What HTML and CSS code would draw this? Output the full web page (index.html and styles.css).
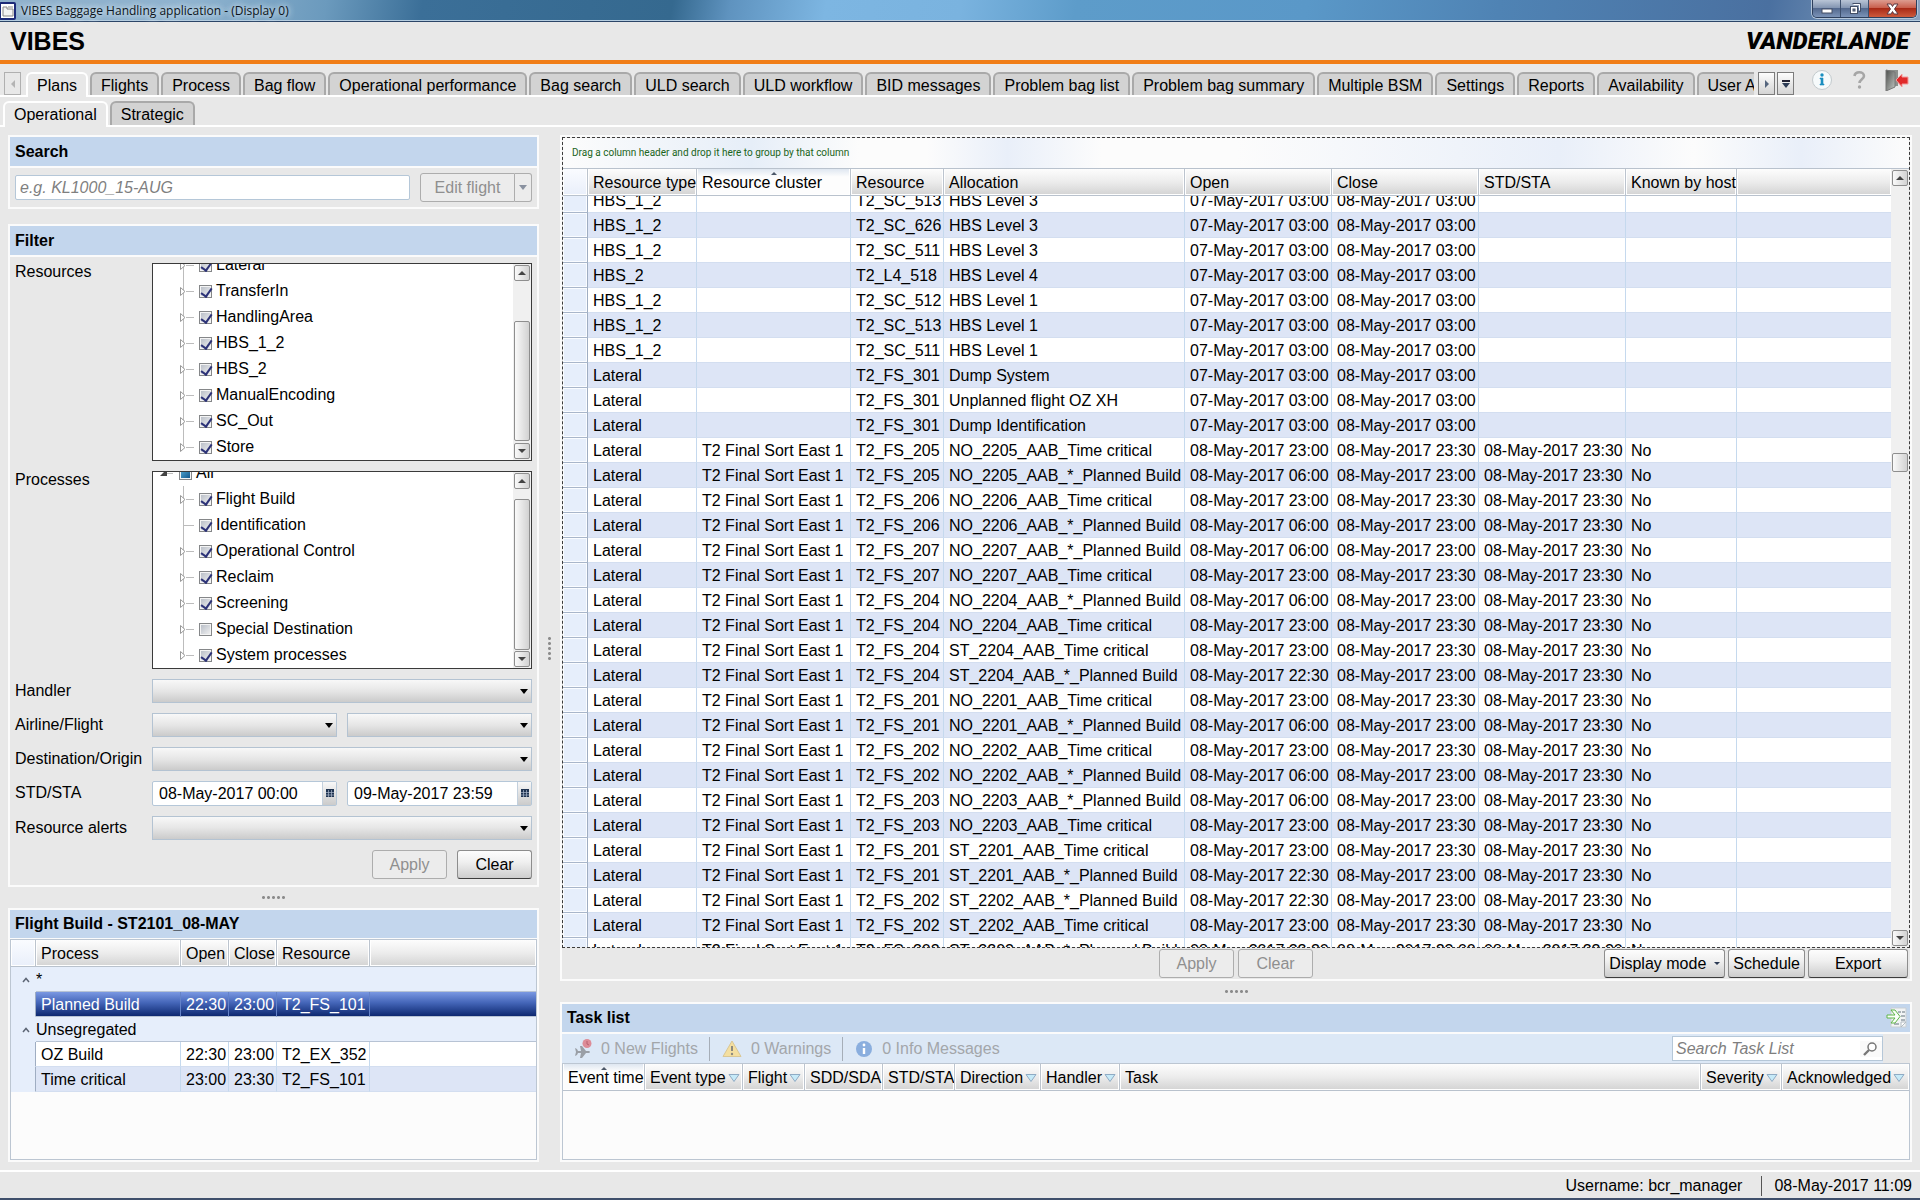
FILE: index.html
```html
<!DOCTYPE html>
<html lang="en">
<head>
  <meta charset="utf-8">
  <title>VIBES Baggage Handling application</title>
  <link rel="stylesheet" href="styles.css">
</head>
<body>

<div class="titlebar">
  <svg class="app-icon" width="16" height="18" viewBox="0 0 16 18">
    <rect x="0" y="1" width="15" height="16" rx="1" fill="#fff" stroke="#1c2a78" stroke-width="2"/>
    <path d="M3 14V5h4v2h6v7z" fill="#f4f4f4" stroke="#888"/>
    <path d="M8 5h5" stroke="#888"/>
  </svg>
  <span class="window-title">VIBES Baggage Handling application - (Display 0)</span>
  <div class="window-buttons">
    <button class="win-min" aria-label="Minimize">
      <svg width="12" height="12" viewBox="0 0 12 12"><rect x="1" y="6" width="10" height="4" fill="#fff" stroke="#444f66"/></svg>
    </button>
    <button class="win-max" aria-label="Restore">
      <svg width="12" height="13" viewBox="0 0 12 13"><path d="M3.500 1.500h8v8h-2" fill="none" stroke="#444f66"/><path d="M4.500 2.500h6v6" fill="none" stroke="#fff"/><rect x="1.500" y="4.500" width="7" height="7" fill="#fff" stroke="#444f66"/><rect x="4" y="7" width="2" height="2" fill="#7d8ba6" stroke="#444f66"/></svg>
    </button>
    <button class="win-close" aria-label="Close">
      <svg width="13" height="12" viewBox="0 0 13 12"><path d="M1 1h4l1.500 2.500L8 1h4L8.500 6 12 11H8L6.500 8.500 5 11H1l3.500-5z" fill="#fff" stroke="#5d3a44"/></svg>
    </button>
  </div>
</div>

<header>
  <h1>VIBES</h1>
  <span class="brand">VANDERLANDE</span>
</header>

<nav class="main-nav">
  <button class="nav-btn nav-left" aria-label="Previous tabs" disabled>
    <svg width="6" height="8" viewBox="0 0 6 8"><path d="M5 0v8L1 4z" fill="#b4b4b4"/></svg>
  </button>
  <div class="tabs">
    <a class="tab active" href="#">Plans</a>
    <a class="tab" href="#">Flights</a>
    <a class="tab" href="#">Process</a>
    <a class="tab" href="#">Bag flow</a>
    <a class="tab" href="#">Operational performance</a>
    <a class="tab" href="#">Bag search</a>
    <a class="tab" href="#">ULD search</a>
    <a class="tab" href="#">ULD workflow</a>
    <a class="tab" href="#">BID messages</a>
    <a class="tab" href="#">Problem bag list</a>
    <a class="tab" href="#">Problem bag summary</a>
    <a class="tab" href="#">Multiple BSM</a>
    <a class="tab" href="#">Settings</a>
    <a class="tab" href="#">Reports</a>
    <a class="tab" href="#">Availability</a>
    <a class="tab" href="#">User Administration</a>
  </div>
  <button class="nav-btn" aria-label="Next tabs">
    <svg width="6" height="8" viewBox="0 0 6 8"><path d="M1 0v8l4-4z" fill="#55657d"/></svg>
  </button>
  <button class="nav-btn" aria-label="All tabs">
    <svg width="8" height="8" viewBox="0 0 8 8"><path d="M0 1h8" stroke="#223" stroke-width="2"/><path d="M0 3h8L4 8z" fill="#2c3b55"/></svg>
  </button>
  <div class="nav-icons">
    <button aria-label="Info">
      <svg width="22" height="22" viewBox="0 0 22 22"><circle cx="11" cy="11" r="9.500" fill="#f6fafb" stroke="#c3cacd"/><path d="M9 9h3v6h1v1H9v-1h1v-5H9z" fill="#1b8fc0" stroke="#1b8fc0" stroke-width=".6"/><circle cx="11" cy="6" r="1.700" fill="#1b8fc0"/></svg>
    </button>
    <button aria-label="Help">
      <svg width="16" height="22" viewBox="0 0 16 22"><path d="M3.500 7C4 2 13 2 13 7c0 3-4.500 3.500-4.500 7" fill="none" stroke="#a6a6a6" stroke-width="2.600"/><circle cx="8.500" cy="18" r="1.700" fill="#a6a6a6"/></svg>
    </button>
    <button aria-label="Log out">
      <svg width="24" height="22" viewBox="0 0 24 22">
        <defs><linearGradient id="door" x2="1" y2="1"><stop offset="0" stop-color="#4d4f4d"/><stop offset="1" stop-color="#c3c7c3"/></linearGradient></defs>
        <path d="M1 1h12v16H1z" fill="#8c908c"/>
        <path d="M1 1l9 2v15l-9 4z" fill="url(#door)" stroke="#777"/>
        <path d="M11 11l6-6v3h6v7h-6v3z" fill="#e02a2a" stroke="#f49a9a"/>
      </svg>
    </button>
  </div>
</nav>

<nav class="sub-nav">
  <a class="tab active" href="#">Operational</a>
  <a class="tab" href="#">Strategic</a>
</nav>

<main>
  <aside>
    <section class="panel search-panel">
      <h2>Search</h2>
      <div class="search-row">
        <input type="text" class="text-input" placeholder="e.g. KL1000_15-AUG" aria-label="Search flight">
        <div class="split-button">
          <button class="btn" disabled>Edit flight</button>
          <button class="btn split-arrow" aria-label="More edit options" disabled><span class="caret"></span></button>
        </div>
      </div>
    </section>

    <section class="panel filter-panel">
      <h2>Filter</h2>
      <form class="filter-form">
        <span class="form-label">Resources</span>
        <div class="tree-box wide">
          <ul class="tree" id="resourceTree"></ul>
          <div class="scrollbar"><button type="button" class="up" aria-label="Scroll up"></button><i style="flex-grow: 40"></i><b style="flex-grow: 120"></b><i style="flex-grow: 2"></i><button type="button" class="down" aria-label="Scroll down"></button></div>
        </div>

        <span class="form-label">Processes</span>
        <div class="tree-box wide">
          <ul class="tree" id="processTree"></ul>
          <div class="scrollbar"><button type="button" class="up" aria-label="Scroll up"></button><i style="flex-grow: 10"></i><b style="flex-grow: 151"></b><i style="flex-grow: 1"></i><button type="button" class="down" aria-label="Scroll down"></button></div>
        </div>

        <label for="handler">Handler</label>
        <div class="select wide"><select id="handler"><option></option></select></div>

        <label for="airline">Airline/Flight</label>
        <div class="select"><select id="airline"><option></option></select></div>
        <div class="select"><select aria-label="Flight"><option></option></select></div>

        <label for="destination">Destination/Origin</label>
        <div class="select wide"><select id="destination"><option></option></select></div>

        <label for="stdFrom">STD/STA</label>
        <div class="date-input">
          <input type="text" id="stdFrom" value="08-May-2017 00:00">
          <button type="button" aria-label="Pick start date"><svg width="8" height="8"><use href="#calendar"/></svg></button>
        </div>
        <div class="date-input">
          <input type="text" aria-label="STD/STA until" value="09-May-2017 23:59">
          <button type="button" aria-label="Pick end date"><svg width="8" height="8"><use href="#calendar"/></svg></button>
        </div>

        <label for="alerts">Resource alerts</label>
        <div class="select wide"><select id="alerts"><option></option></select></div>

        <div class="form-buttons">
          <button type="button" class="btn" disabled>Apply</button>
          <button type="button" class="btn">Clear</button>
        </div>
      </form>
    </section>

    <div class="grip"></div>

    <section class="panel build-panel">
      <h2>Flight Build - ST2101_08-MAY</h2>
      <div class="grid-box">
        <table class="grid build-grid">
          <colgroup><col class="c-mark"><col class="c-process"><col class="c-time"><col class="c-time"><col class="c-res"><col></colgroup>
          <thead>
            <tr><th></th><th>Process</th><th>Open</th><th>Close</th><th>Resource</th><th></th></tr>
          </thead>
          <tbody>
            <tr class="group"><td class="mark"><svg width="8" height="6"><use href="#chevron"/></svg></td><td colspan="5">*</td></tr>
            <tr class="selected"><td class="mark"></td><td>Planned Build</td><td>22:30</td><td>23:00</td><td>T2_FS_101</td><td></td></tr>
            <tr class="group"><td class="mark"><svg width="8" height="6"><use href="#chevron"/></svg></td><td colspan="5">Unsegregated</td></tr>
            <tr><td class="mark"></td><td>OZ Build</td><td>22:30</td><td>23:00</td><td>T2_EX_352</td><td></td></tr>
            <tr class="alt"><td class="mark"></td><td>Time critical</td><td>23:00</td><td>23:30</td><td>T2_FS_101</td><td></td></tr>
          </tbody>
        </table>
      </div>
    </section>
  </aside>

  <div class="grip vertical"></div>

  <div class="content">
    <section class="panel plan-panel">
      <div class="plan-box">
        <div class="group-bar">Drag a column header and drop it here to group by that column</div>
        <div class="plan-scroll">
          <div class="plan-rows" id="planRows">
            <table class="grid plan-grid">
              <colgroup>
                <col class="c-mark"><col class="c-type"><col class="c-cluster"><col class="c-resource"><col class="c-alloc">
                <col class="c-date"><col class="c-date"><col class="c-date"><col class="c-known"><col>
              </colgroup>
              <thead>
                <tr>
                  <th></th><th>Resource type</th><th class="sorted">Resource cluster</th><th>Resource</th><th>Allocation</th>
                  <th>Open</th><th>Close</th><th>STD/STA</th><th>Known by host</th><th></th>
                </tr>
              </thead>
              <tbody>
                <!-- Plan rows are added by loadPlans() -->
              </tbody>
            </table>
          </div>
          <div class="scrollbar"><button type="button" class="up" aria-label="Scroll up"></button><i style="flex-grow: 268"></i><b style="flex-grow: 17"></b><i style="flex-grow: 459"></i><button type="button" class="down" aria-label="Scroll down"></button></div>
        </div>
      </div>
      <div class="plan-footer">
        <div class="footer-center">
          <button class="btn" disabled>Apply</button>
          <button class="btn" disabled>Clear</button>
        </div>
        <div class="footer-right">
          <button class="btn tight menu-btn">Display mode<span class="caret small"></span></button>
          <button class="btn tight">Schedule</button>
          <button class="btn export-btn">Export</button>
        </div>
      </div>
    </section>

    <div class="grip"></div>

    <section class="panel task-panel">
      <h2>Task list
        <button class="export-icon" aria-label="Export task list">
          <svg width="22" height="22" viewBox="0 0 22 22">
            <path d="M5 1h15v19H5z" fill="#f2f4f5" stroke="#c9cfd4"/>
            <path d="M12 5h3M16 5h3M15 9h4M15 13h4M8 17h5" stroke="#aab2b8" stroke-width="2"/>
            <path d="M15 20v-5h5z" fill="#fff" stroke="#b4bcc2"/>
            <path d="M1 8h8L5 3h4l5 6.500L9 16H5l4-5H1z" fill="#fbfffa" stroke="#5fb548"/>
          </svg>
        </button>
      </h2>
      <div class="task-tools">
        <div class="task-counts">
          <button disabled>
            <svg width="18" height="20" viewBox="0 0 18 20"><path d="M1 9l2 1 1 2h3L6 7h2l4 5h3q2 1 0 2h-3l-4 5H6l1-5H4l-1 2-2 1 1-4z" fill="#9a9fa6"/><circle cx="13" cy="4.500" r="4.500" fill="#dd8c97"/><path d="M13 2v3l2 1" fill="none" stroke="#b8606e"/></svg>
            0 New Flights
          </button>
          <button disabled>
            <svg width="20" height="18" viewBox="0 0 20 18"><path d="M10 1l9 15.500H1z" fill="#f4dfa0" stroke="#d9c795" stroke-linejoin="round"/><path d="M10 6v5" stroke="#8d8a80" stroke-width="2"/><circle cx="10" cy="14" r="1.200" fill="#8d8a80"/></svg>
            0 Warnings
          </button>
          <button disabled>
            <svg width="18" height="18" viewBox="0 0 18 18"><circle cx="9" cy="9" r="8" fill="#8aaede"/><path d="M9 8v6" stroke="#fff" stroke-width="2.400"/><circle cx="9" cy="5" r="1.400" fill="#fff"/></svg>
            0 Info Messages
          </button>
        </div>
        <div class="task-search">
          <input type="text" placeholder="Search Task List" aria-label="Search Task List">
          <button aria-label="Search">
            <svg width="16" height="16" viewBox="0 0 16 16"><circle cx="10" cy="6" r="4" fill="#fff" stroke="#777" stroke-width="1.500"/><path d="M7 9l-5 5" stroke="#777" stroke-width="2.400"/></svg>
          </button>
        </div>
      </div>
      <div class="grid-box">
        <table class="grid task-grid">
          <colgroup>
            <col class="t-time"><col class="t-type"><col class="t-flight"><col class="t-sdd"><col class="t-std">
            <col class="t-dir"><col class="t-handler"><col><col class="t-sev"><col class="t-ack">
          </colgroup>
          <thead>
            <tr>
              <th class="sorted">Event time</th>
              <th>Event type<svg width="12" height="10"><use href="#funnel"/></svg></th>
              <th>Flight<svg width="12" height="10"><use href="#funnel"/></svg></th>
              <th>SDD/SDA</th>
              <th>STD/STA</th>
              <th>Direction<svg width="12" height="10"><use href="#funnel"/></svg></th>
              <th>Handler<svg width="12" height="10"><use href="#funnel"/></svg></th>
              <th>Task</th>
              <th>Severity<svg width="12" height="10"><use href="#funnel"/></svg></th>
              <th>Acknowledged<svg width="12" height="10"><use href="#funnel"/></svg></th>
            </tr>
          </thead>
          <tbody></tbody>
        </table>
      </div>
    </section>
  </div>
</main>

<footer>
  <span>Username: bcr_manager</span>
  <span class="clock">08-May-2017 11:09</span>
</footer>

<svg class="symbols" width="0" height="0">
  <symbol id="calendar" viewBox="0 0 8 8"><rect width="8" height="8" fill="#1f3350"/><path d="M2.500 1v7M5.500 1v7M0 3.500h8M0 6h8" stroke="#aab8cc" stroke-width=".7"/></symbol>
  <symbol id="chevron" viewBox="0 0 8 6"><path d="M1 5l3-3.500L7 5" fill="none" stroke="#5d6675" stroke-width="1.500"/></symbol>
  <symbol id="funnel" viewBox="0 0 12 10"><path d="M1 1.500h10L6 8.500z" fill="#c6eaf8" stroke="#8fabc4"/></symbol>
  <symbol id="twig" viewBox="0 0 16 26"><path d="M4.500 0v26M7 13.500h8" stroke="#bcbcbc"/><path d="M1.500 9.500v8l4.500-4z" fill="#fff" stroke="#999"/></symbol>
  <symbol id="twigLast" viewBox="0 0 16 26"><path d="M4.500 0v13M7 13.500h8" stroke="#bcbcbc"/><path d="M1.500 9.500v8l4.500-4z" fill="#fff" stroke="#999"/></symbol>
  <symbol id="twigLeaf" viewBox="0 0 16 26"><path d="M4.500 0v26M4 13.500h11" stroke="#bcbcbc"/></symbol>
  <symbol id="twigOpen" viewBox="0 0 16 26"><path d="M8 13.500h6" stroke="#bcbcbc"/><path d="M8 9v7H1z" fill="#444"/></symbol>
</svg>

<script>
  const resources = ["Lateral", "TransferIn", "HandlingArea", "HBS_1_2", "HBS_2", "ManualEncoding", "SC_Out", "Store"];
  const processes = ["Flight Build", "Identification", "Operational Control", "Reclaim", "Screening", "Special Destination", "System processes"];

  // type, cluster, resource, allocation, open, close, std, known
  const plans = [];

  function addSystem(type, resource, allocation) {
    plans.push([type, "", resource, allocation, "07-May-2017 03:00", "08-May-2017 03:00", "", ""]);
  }

  function addSort(number, prefix, process) {
    const critical = process === "Time critical";
    const open = critical ? "23:00" : (prefix === "ST" ? "22:30" : "06:00");
    const close = critical ? "23:30" : "23:00";
    const name = prefix + "_2" + number + "_AAB_" + (critical ? "" : "*_") + process;
    plans.push(["Lateral", "T2 Final Sort East 1", "T2_FS_" + number, name,
      "08-May-2017 " + open, "08-May-2017 " + close, "08-May-2017 23:30", "No"]);
  }

  addSystem("HBS_1_2", "T2_SC_513", "HBS Level 3");
  addSystem("HBS_1_2", "T2_SC_626", "HBS Level 3");
  addSystem("HBS_1_2", "T2_SC_511", "HBS Level 3");
  addSystem("HBS_2", "T2_L4_518", "HBS Level 4");
  addSystem("HBS_1_2", "T2_SC_512", "HBS Level 1");
  addSystem("HBS_1_2", "T2_SC_513", "HBS Level 1");
  addSystem("HBS_1_2", "T2_SC_511", "HBS Level 1");
  addSystem("Lateral", "T2_FS_301", "Dump System");
  addSystem("Lateral", "T2_FS_301", "Unplanned flight OZ XH");
  addSystem("Lateral", "T2_FS_301", "Dump Identification");

  addSort(205, "NO", "Time critical");
  addSort(205, "NO", "Planned Build");
  addSort(206, "NO", "Time critical");
  addSort(206, "NO", "Planned Build");
  addSort(207, "NO", "Planned Build");
  addSort(207, "NO", "Time critical");
  addSort(204, "NO", "Planned Build");
  addSort(204, "NO", "Time critical");
  addSort(204, "ST", "Time critical");
  addSort(204, "ST", "Planned Build");
  addSort(201, "NO", "Time critical");
  addSort(201, "NO", "Planned Build");
  addSort(202, "NO", "Time critical");
  addSort(202, "NO", "Planned Build");
  addSort(203, "NO", "Planned Build");
  addSort(203, "NO", "Time critical");
  addSort(201, "ST", "Time critical");
  addSort(201, "ST", "Planned Build");
  addSort(202, "ST", "Planned Build");
  addSort(202, "ST", "Time critical");
  addSort(203, "ST", "Planned Build");

  function loadPlans() {
    const table = document.querySelector("#planRows tbody");
    plans.forEach((plan, index) => {
      const row = document.createElement("tr");
      if (index % 2) row.className = "alt";
      row.innerHTML = `<td class="mark"></td>` + plan.map(value => `<td>${value}</td>`).join("") + "<td></td>";
      table.appendChild(row);
    });
    document.getElementById("planRows").scrollTop = 8;
  }

  function treeItem(name, twig, checked) {
    return `<li><svg width="16" height="26"><use href="#${twig}"/></svg>
      <label><input type="checkbox" ${checked ? "checked" : ""}>${name}</label></li>`;
  }

  function loadTree(id, names, root) {
    const tree = document.getElementById(id);
    let html = root ? `<li class="root"><svg width="16" height="26"><use href="#twigOpen"/></svg>
      <label><input type="checkbox" class="partial">${root}</label></li>` : "";
    names.forEach((name, index) => {
      let twig = index === names.length - 1 ? "twigLast" : "twig";
      if (name === "Identification") twig = "twigLeaf";
      html += treeItem(name, twig, name !== "Special Destination");
    });
    tree.innerHTML = html;
    tree.scrollTop = tree.scrollHeight;
  }

  loadTree("resourceTree", resources);
  loadTree("processTree", processes, "All");
  loadPlans();
</script>

</body>
</html>
```
FILE: styles.css
```css
* {
  box-sizing: border-box;
}

body {
  font-family: "Liberation Sans", Arial, sans-serif;
  font-size: 16px;
  color: #000;
  background: #e8e8e8;
  margin: 0;
  height: 100vh;
  display: flex;
  flex-direction: column;
  overflow: hidden;
}

h1, h2, ul {
  margin: 0;
  padding: 0;
}

a {
  color: inherit;
  text-decoration: none;
}

button, input, select {
  font: inherit;
  color: inherit;
  margin: 0;
}

svg {
  display: block;
  flex: none;
}

.symbols {
  position: absolute;
}

/* window title */
.titlebar {
  flex: none;
  display: flex;
  align-items: center;
  height: 22px;
  border-bottom: 1px solid #2c4668;
  box-shadow: inset 0 -1px #b5cde0;
  background: linear-gradient(100deg, #8fb0cb 0%, #8fb3cf 10%, #6b9abd 17%, #3b6f98 22%, #35698f 35%, #5f93bf 38%, #7db6e2 43%, #7ab3df 50%, #5d9cca 56%, #5a98c8 68%, #4f83b4 78%, #4a70a0 92%, #8ba3c0 100%);
}

.app-icon {
  margin: 0 5px 0 0;
}

.window-title {
  flex: 1;
  font-family: "Open Sans", "Noto Sans", sans-serif;
  font-size: 12px;
  color: #0b1420;
  text-shadow: 0 0 6px #dbe8f2, 0 0 6px #dbe8f2;
}

.window-buttons {
  align-self: flex-start;
  display: flex;
  height: 18px;
  margin-right: 3px;
  border: 1px solid #2d3f5c;
  border-top: none;
  border-radius: 0 0 5px 5px;
  overflow: hidden;
  box-shadow: 0 0 0 1px #b4c6da;
}

.window-buttons button {
  display: flex;
  align-items: center;
  justify-content: center;
  width: 28px;
  padding: 0;
  border: none;
  border-right: 1px solid #3d506e;
  background: linear-gradient(#b9c5d6, #8496b2 45%, #53698e 50%, #7b93b8);
}

.window-buttons .win-close {
  width: 47px;
  border-right: none;
  background: linear-gradient(#dd9c90, #c9604e 45%, #a92a17 50%, #cd5a3c);
}

header {
  flex: none;
  display: flex;
  align-items: center;
  justify-content: space-between;
  height: 42px;
  padding: 0 11px 0 10px;
  border-bottom: 4px solid #f07d17;
}

h1 {
  font-size: 25px;
  line-height: 38px;
}

.brand {
  font-family: Roboto, "Liberation Sans", sans-serif;
  font-weight: 900;
  font-style: italic;
  font-size: 24px;
}

/* tabs */
.main-nav {
  flex: none;
  display: flex;
  align-items: flex-end;
  height: 33px;
  padding: 0 11px 0 4px;
  border-bottom: 2px solid #fff;
}

.tabs {
  flex: 1;
  min-width: 0;
  display: flex;
  gap: 2px;
  overflow: hidden;
  margin: 0 4px -2px 5px;
}

.tab {
  flex: none;
  height: 23px;
  padding: 0 9px;
  line-height: 24px;
  border: 2px solid #a9a9a9;
  border-bottom: none;
  border-radius: 6px 6px 0 0;
  background: #d3d3d3;
  white-space: nowrap;
}

.tab.active {
  height: 25px;
  border-color: #fff;
  background: #e8e8e8;
}

.nav-btn {
  flex: none;
  display: flex;
  align-items: center;
  justify-content: center;
  width: 17px;
  height: 23px;
  padding: 0;
  border: 1px solid #7c7c7c;
  background: linear-gradient(#fdfdfd, #d4d4d4);
}

.nav-btn + .nav-btn {
  margin-left: 2px;
}

.nav-left {
  border-color: #b0b0b0;
  background: #e8e8e8;
}

.nav-icons {
  display: flex;
  align-items: center;
  align-self: center;
  gap: 18px;
  margin-left: 17px;
}

.nav-icons button {
  padding: 0;
  border: none;
  background: none;
}

.sub-nav {
  flex: none;
  display: flex;
  align-items: flex-end;
  gap: 2px;
  height: 30px;
  padding-left: 3px;
  border-bottom: 2px solid #fff;
}

.sub-nav .tab {
  height: 24px;
}

.sub-nav .tab.active {
  height: 26px;
  margin-bottom: -2px;
}

/* page areas */
main {
  flex: 1;
  min-height: 0;
  display: grid;
  grid-template-columns: 531px 21px minmax(0, 1fr);
  padding: 8px;
}

aside, .content {
  display: flex;
  flex-direction: column;
  min-width: 0;
  min-height: 0;
}

.panel {
  border: 2px solid #fbfbfb;
}

h2 {
  display: flex;
  align-items: center;
  justify-content: space-between;
  font-size: 16px;
  line-height: 28px;
  padding-left: 5px;
  background: #c3d6ed;
  border-bottom: 2px solid #fbfbfb;
}

.search-panel h2, .filter-panel h2 {
  line-height: 29px;
}

.grip {
  flex: none;
  align-self: center;
  width: 25px;
  height: 21px;
  background: radial-gradient(circle, #8c8c8c 1px, transparent 2px) center / 5px 5px repeat-x;
}

.grip.vertical {
  width: 5px;
  height: 25px;
  justify-self: center;
  background: radial-gradient(circle, #8c8c8c 1px, transparent 2px) center / 5px 5px repeat-y;
}

/* buttons */
.btn {
  height: 29px;
  padding: 0 8px;
  border: 1px solid #8d8d8d;
  border-bottom-color: #3c3c3c;
  border-radius: 3px;
  background: linear-gradient(#fdfdfd, #f0f0f0 40%, #cdcdcd);
}

.btn:disabled {
  color: #8f8f8f;
  border-color: #adadad;
  background: #ececec;
}

.btn.tight {
  padding: 0 4px;
}

.menu-btn {
  display: flex;
  align-items: center;
  gap: 8px;
}

.export-btn {
  width: 100px;
}

.caret {
  display: inline-block;
  border: 4px solid transparent;
  border-top: 5px solid #8a92a0;
  border-bottom: none;
}

.caret.small {
  border-width: 3px;
  border-top: 3px solid #2c3b55;
  border-bottom: none;
}

/* search */
.search-panel {
  margin-bottom: 15px;
}

.search-row {
  display: flex;
  gap: 10px;
  padding: 5px;
}

.text-input {
  flex: 1;
  min-width: 0;
  height: 25px;
  margin-top: 2px;
  padding: 0 4px;
  border: 1px solid #b5c7d8;
  border-radius: 2px;
  background: #fff;
}

input::placeholder {
  color: #7f7f7f;
  font-style: italic;
  opacity: 1;
}

.split-button {
  display: flex;
}

.split-button .btn:first-child {
  width: 95px;
  border-radius: 3px 0 0 3px;
}

.split-button .split-arrow {
  display: flex;
  align-items: center;
  width: 17px;
  padding: 0 4px;
  border-left: none;
  border-radius: 0 3px 3px 0;
}

/* filter */
.filter-form {
  display: grid;
  grid-template-columns: 127px minmax(0, 1fr) minmax(0, 1fr);
  gap: 10px;
  padding: 6px 5px;
}

.filter-form > label {
  line-height: 24px;
}

.wide {
  grid-column: span 2;
}

.tree-box {
  display: flex;
  height: 198px;
  border: 1px solid #3a3a3a;
  background: #fff;
}

.tree {
  flex: 1;
  overflow: hidden;
  list-style: none;
  padding-left: 26px;
}

.tree li {
  display: flex;
  gap: 4px;
  height: 26px;
}

.tree .root {
  margin-left: -20px;
}

.tree label {
  display: flex;
  align-items: center;
  gap: 4px;
}

input[type="checkbox"] {
  appearance: none;
  position: relative;
  width: 13px;
  height: 13px;
  border: 1px solid #858789;
  background: linear-gradient(135deg, #b4bac4, #f4f4f4);
  box-shadow: inset 0 0 0 1px #f4f4f4;
}

input[type="checkbox"]:checked::after {
  content: "";
  position: absolute;
  left: 3px;
  top: 0;
  width: 5px;
  height: 9px;
  border: solid #2c3277;
  border-width: 0 2px 2px 0;
  transform: rotate(35deg);
}

input[type="checkbox"].partial {
  background: linear-gradient(135deg, #5db3dc, #0c4f86);
  box-shadow: inset 0 0 0 1px #f4f4f4;
}

.scrollbar {
  flex: none;
  display: flex;
  flex-direction: column;
  width: 18px;
  padding: 1px;
  background: #f0f0f0;
}

.scrollbar button, .scrollbar b {
  border: 1px solid #8e8e8e;
  border-radius: 2px;
  background: linear-gradient(90deg, #fafafa, #d2d2d2);
}

.scrollbar button {
  flex: none;
  display: flex;
  align-items: center;
  justify-content: center;
  height: 16px;
  padding: 0;
}

.scrollbar button::before {
  content: "";
  border: 4px solid transparent;
}

.scrollbar .up::before {
  border-top: none;
  border-bottom-color: #444;
}

.scrollbar .down::before {
  border-bottom: none;
  border-top-color: #444;
}

.scrollbar i, .scrollbar b {
  flex-basis: 0;
}

.select {
  position: relative;
  height: 24px;
}

.select select {
  appearance: none;
  display: block;
  width: 100%;
  height: 24px;
  border: 1px solid #b4c3d2;
  border-radius: 0;
  background: linear-gradient(#f8f8f8, #e6e6e6 50%, #cbcbcb);
}

.select::after {
  content: "";
  position: absolute;
  right: 4px;
  top: 10px;
  border: 4px solid transparent;
  border-top: 5px solid #000;
  border-bottom: none;
  pointer-events: none;
}

.date-input {
  display: flex;
  height: 25px;
  border: 1px solid #b5c7d8;
  border-radius: 2px;
  background: #fff;
}

.date-input input {
  flex: 1;
  min-width: 0;
  padding: 1px 6px 0;
  border: none;
  background: none;
}

.date-input button {
  display: flex;
  justify-content: center;
  width: 14px;
  padding: 7px 0;
  border: none;
  border-left: 1px solid #c3d0dd;
  background: linear-gradient(#f8f8f8, #cbcbcb);
}

.form-buttons {
  grid-column: 1 / -1;
  display: flex;
  justify-content: flex-end;
  gap: 10px;
}

.form-buttons .btn {
  width: 75px;
}

/* grids */
.grid {
  width: 100%;
  table-layout: fixed;
  border-collapse: separate;
  border-spacing: 0;
}

.grid th, .grid td {
  overflow: hidden;
  white-space: nowrap;
  text-align: left;
  font-weight: normal;
}

.grid th {
  position: sticky;
  top: 0;
  z-index: 1;
  height: 27px;
  padding: 2px 0 0 5px;
  border-right: 1px solid #bcc4ce;
  border-bottom: 1px solid #b9c2cd;
  background: linear-gradient(#fdfdfd, #ececec 50%, #d3d3d3);
  box-shadow: inset 1px -1px #fff, inset -1px 0 #fff;
}

.grid th:last-child, .grid td:last-child {
  border-right: none;
}

.grid th.sorted {
  background: linear-gradient(#dfe7f1, #fdfdfd 30%);
}

.grid th.sorted::after {
  content: "";
  position: absolute;
  left: calc(50% - 3px);
  top: 3px;
  border: 3px solid transparent;
  border-bottom: 3px solid #4d5868;
  border-top: none;
}

.grid th svg {
  display: inline-block;
  margin-left: 2px;
}

.grid td {
  height: 25px;
  padding: 2px 0 0 5px;
  border-right: 1px solid #c5d9ee;
  border-bottom: 1px solid #d3def0;
  background: #fff;
}

.grid .alt td {
  background: #dde5f6;
}

.grid td.mark {
  padding: 2px 0 0 11px;
  border-right: 1px solid #9fadc2;
  border-bottom: 1px solid #a9b6ca;
  background: #e6eefb;
}

.plan-grid td.mark {
  box-shadow: inset 1px 1px #fafcff, inset -1px -1px #fafcff;
}

.plan-grid th:first-child, .build-grid th:first-child {
  background: linear-gradient(#fafcff, #e9effa);
}

.build-grid td.mark {
  border-bottom-color: #e6eefb;
}

.grid .group td {
  background: #e6eefb;
  border-right: none;
  border-bottom-color: #b7c3d4;
  padding-left: 0;
}

.grid .group td.mark {
  padding-left: 11px;
  border-bottom-color: #e6eefb;
}

.grid .selected td:not(.mark) {
  color: #fff;
  border-right-color: #6482c8;
  border-bottom-color: #b7c3d4;
  background: linear-gradient(#7a98e2, #4465b8 45%, #0d2870);
}

.grid-box {
  flex: 1;
  min-height: 0;
  overflow: hidden;
  border: 1px solid #bcc6d2;
  background: #fcfcfc;
}

.build-panel {
  flex: 1;
  min-height: 0;
  display: flex;
  flex-direction: column;
}

.build-panel h2, .task-panel h2 {
  border-bottom-width: 1px;
}

.c-mark { width: 25px; }
.c-process { width: 145px; }
.c-time { width: 48px; }
.c-res { width: 93px; }
.c-type { width: 109px; }
.c-cluster { width: 154px; }
.c-resource { width: 93px; }
.c-alloc { width: 241px; }
.c-date { width: 147px; }
.c-known { width: 111px; }

/* plan list */
.plan-panel {
  flex: 1;
  min-height: 0;
  display: flex;
  flex-direction: column;
}

.plan-box {
  flex: 1;
  min-height: 0;
  display: flex;
  flex-direction: column;
  border: 1px dashed #3b3b3b;
}

.group-bar {
  flex: none;
  height: 31px;
  padding-left: 9px;
  line-height: 30px;
  font-family: Roboto, "Liberation Sans", sans-serif;
  font-size: 10px;
  color: #1a6420;
  border-bottom: 1px solid #b9c2cd;
  background: linear-gradient(90deg, #fcfcfc, #e6eef8 14%, #fcfcfc 22%, #fcfcfc 27%, #e9eff9 33%, #fcfcfc 40%, #fcfcfc 50%, #e9eff9 74%, #fcfcfc 84%, #e9eff9 92%, #fcfcfc);
}

.plan-scroll {
  flex: 1;
  min-height: 0;
  display: flex;
}

.plan-rows {
  flex: 1;
  min-width: 0;
  overflow: hidden;
}

.plan-footer {
  flex: none;
  display: grid;
  grid-template-columns: 1fr auto 1fr;
  padding: 1px 2px 1px;
}

.footer-center {
  grid-column: 2;
  display: flex;
  gap: 4px;
}

.footer-center .btn {
  width: 75px;
}

.footer-right {
  display: flex;
  justify-content: flex-end;
  gap: 3px;
}

/* task list */
.task-panel {
  flex: 0 0 160px;
  display: flex;
  flex-direction: column;
}

.export-icon {
  display: flex;
  padding: 0 2px;
  border: none;
  background: none;
}

.task-tools {
  display: flex;
  align-items: center;
  height: 30px;
  padding-right: 27px;
  background: linear-gradient(270deg, #e8e8e8 27px, #dce8f6 27px);
  border-top: 1px solid #fbfbfb;
}

.task-counts {
  flex: 1;
  display: flex;
}

.task-counts button {
  display: flex;
  align-items: center;
  gap: 9px;
  height: 24px;
  padding: 0 11px 0 12px;
  border: none;
  border-right: 1px solid #a6aeb8;
  background: none;
  color: #a3a6aa;
}

.task-counts button:last-child {
  border-right: none;
}

.task-search {
  display: flex;
  align-items: center;
  width: 211px;
  height: 25px;
  border: 1px solid #b5c7d8;
  background: #fff;
}

.task-search input {
  flex: 1;
  min-width: 0;
  padding: 0 3px;
  border: none;
  background: none;
}

.task-search button {
  padding: 0 4px 0 2px;
  border: none;
  background: #fafafa;
}

.t-time { width: 82px; }
.t-type { width: 98px; }
.t-flight { width: 62px; }
.t-sdd { width: 78px; }
.t-std { width: 72px; }
.t-dir { width: 86px; }
.t-handler { width: 79px; }
.t-sev { width: 81px; }
.t-ack { width: 127px; }

footer {
  flex: none;
  display: flex;
  align-items: center;
  justify-content: flex-end;
  height: 30px;
  padding: 1px 8px 0 0;
  border-top: 2px solid #fff;
  border-bottom: 2px solid #3f4f6b;
}

.clock {
  margin-left: 19px;
  padding-left: 12px;
  line-height: 20px;
  border-left: 1px solid #555;
}
```
